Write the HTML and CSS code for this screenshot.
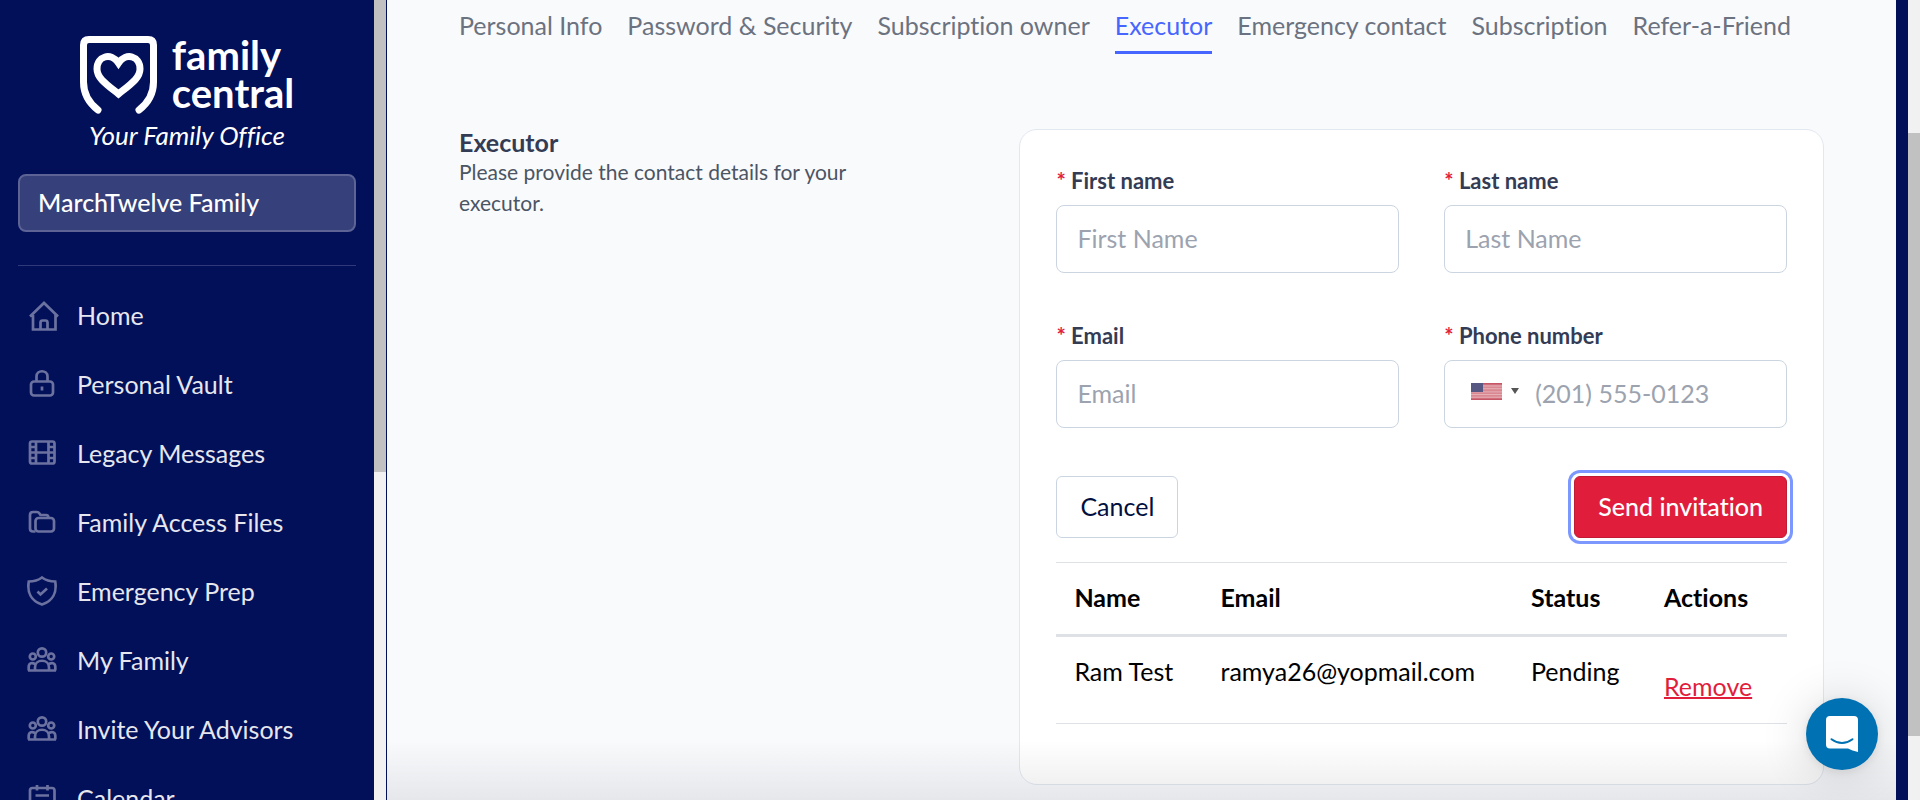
FILE: index.html
```html
<!DOCTYPE html>
<html lang="en">
<head>
<meta charset="utf-8">
<title>Family Central – Executor</title>
<link rel="stylesheet" href="styles.css">
</head>
<body>
<div class="app">
  <aside class="sidebar">
    <div class="sidebar-body">
      <div class="brand">
        <div class="brand-row">
          <svg class="brand-mark" viewBox="0 0 77 78" fill="none" stroke="#fff" stroke-width="7" stroke-linecap="round" stroke-linejoin="round" aria-hidden="true">
            <path d="M18 74C9 67 3.500 59 3.500 46V9Q3.500 3.500 9 3.500H68Q73.500 3.500 73.500 9V46C73.500 59 68 67 59 74"/>
            <path stroke-linejoin="miter" d="M38.500 58C26 48 17 42 17 33C17 20 31 16 38.500 27C46 16 60 20 60 33C60 42 51 48 38.500 58Z"/>
          </svg>
          <div class="brand-name">family<br>central</div>
        </div>
        <div class="brand-tag">Your Family Office</div>
      </div>
      <button type="button" class="family-switch">MarchTwelve Family</button>
      <nav class="side-nav">
        <a href="#"><svg viewBox="0 0 32 32" aria-hidden="true"><path d="M3 17.500L17 4L31 17.500M6 16V30.500H28.500V16M13.500 30V23.500Q13.500 21.500 15.500 21.500H18.500Q20.500 21.500 20.500 23.500V30"/></svg>Home</a>
        <a href="#"><svg viewBox="0 0 32 32" aria-hidden="true"><rect x="4" y="13.500" width="22" height="14" rx="3"/><path d="M9.500 13V8.500C9.500 1.500 20.500 1.500 20.500 8.500V13M15 18.500V22.500"/></svg>Personal Vault</a>
        <a href="#"><svg viewBox="0 0 32 32" aria-hidden="true"><rect x="3" y="4.500" width="24.500" height="22" rx="2"/><path d="M9 4.500V26.500M21.500 4.500V26.500M9 15.500H21.500M3 10H9M3 15.500H9M3 21H9M21.500 10H27.500M21.500 15.500H27.500M21.500 21H27.500"/></svg>Legacy Messages</a>
        <a href="#"><svg viewBox="0 0 32 32" aria-hidden="true"><path d="M8.500 25.500H6Q3 25.500 3 22.500V9Q3 6 6 6H10Q11.500 6 12.500 7.500L13.500 9H19Q21.500 9 21.500 12"/><rect x="8.500" y="12" width="18.500" height="13.500" rx="3"/></svg>Family Access Files</a>
        <a href="#"><svg viewBox="0 0 32 32" aria-hidden="true"><path d="M15 2.500C11 5.500 6 6.500 1.800 6.500C0 17 4 26 15 29.500C26 26 30 17 28.200 6.500C24 6.500 19 5.500 15 2.500ZM10.500 16.500L13.500 19.500L20 13.500"/></svg>Emergency Prep</a>
        <a href="#"><svg viewBox="0 0 32 32" aria-hidden="true"><circle cx="15" cy="8.500" r="4.200"/><circle cx="5.800" cy="12.500" r="3"/><circle cx="24.200" cy="12.500" r="3"/><path d="M1.700 26.500V23C1.700 18.500 5.500 18.500 8 20M28.300 26.500V23C28.300 18.500 24.500 18.500 22 20M8 26.500V23.500C8 14.500 22 14.500 22 23.500V26.500M1 26.500H29"/></svg>My Family</a>
        <a href="#"><svg viewBox="0 0 32 32" aria-hidden="true"><circle cx="15" cy="8.500" r="4.200"/><circle cx="5.800" cy="12.500" r="3"/><circle cx="24.200" cy="12.500" r="3"/><path d="M1.700 26.500V23C1.700 18.500 5.500 18.500 8 20M28.300 26.500V23C28.300 18.500 24.500 18.500 22 20M8 26.500V23.500C8 14.500 22 14.500 22 23.500V26.500M1 26.500H29"/></svg>Invite Your Advisors</a>
        <a href="#"><svg viewBox="0 0 32 32" aria-hidden="true"><rect x="3" y="6" width="24.500" height="22" rx="2.500"/><path d="M10 3V8.500M20.500 3V8.500M8.500 13.500H22"/></svg>Calendar</a>
      </nav>
    </div>
    <div class="scrollbar"><div class="thumb thumb-side"></div></div>
  </aside>

  <main class="content">
    <nav class="tabs">
      <a href="#">Personal Info</a>
      <a href="#">Password &amp; Security</a>
      <a href="#">Subscription owner</a>
      <a href="#" class="active" aria-current="page">Executor</a>
      <a href="#">Emergency contact</a>
      <a href="#">Subscription</a>
      <a href="#">Refer-a-Friend</a>
    </nav>
    <section class="panel">
      <div class="intro">
        <h1>Executor</h1>
        <p>Please provide the contact details for your executor.</p>
      </div>
      <div class="card">
        <form>
          <div class="fields">
            <div class="field">
              <label for="first"><span class="req">*</span> First name</label>
              <input id="first" type="text" placeholder="First Name">
            </div>
            <div class="field">
              <label for="last"><span class="req">*</span> Last name</label>
              <input id="last" type="text" placeholder="Last Name">
            </div>
            <div class="field">
              <label for="email"><span class="req">*</span> Email</label>
              <input id="email" type="email" placeholder="Email">
            </div>
            <div class="field">
              <label for="phone"><span class="req">*</span> Phone number</label>
              <div class="phone">
                <button type="button" class="country" aria-label="Country: United States">
                  <svg class="flag" viewBox="0 0 31 17" aria-hidden="true">
                    <rect width="31" height="17" fill="#d98791"/>
                    <path d="M0 .7H31M0 16.300H31" stroke="#c65565" stroke-width="1.400"/>
                    <path d="M12 3H31M12 5.700H31M0 8.900H31M0 11.500H31M0 14.200H31" stroke="#e7b4ba" stroke-width=".9"/>
                    <rect width="12" height="9" fill="#575783"/>
                  </svg>
                  <svg class="caret" viewBox="0 0 8 6" aria-hidden="true"><path d="M0 0H8L4 6Z" fill="#555"/></svg>
                </button>
                <input id="phone" type="tel" placeholder="(201) 555-0123">
              </div>
            </div>
          </div>
          <div class="actions">
            <button type="button" class="btn btn-plain">Cancel</button>
            <button type="button" class="btn btn-primary">Send invitation</button>
          </div>
        </form>
        <table class="people">
          <thead>
            <tr><th class="c-name">Name</th><th class="c-email">Email</th><th class="c-status">Status</th><th>Actions</th></tr>
          </thead>
          <tbody>
            <tr><td>Ram Test</td><td>ramya26@yopmail.com</td><td>Pending</td><td class="cell-action"><a href="#">Remove</a></td></tr>
          </tbody>
        </table>
      </div>
    </section>
    <div class="fade"></div>
    <button type="button" class="chat" aria-label="Open chat">
      <svg viewBox="0 0 32 36" aria-hidden="true">
        <path d="M4 0H28Q32 0 32 4V36Q26 34.500 22 32.500H4Q0 32.500 0 28.500V4Q0 0 4 0Z" fill="#fff"/>
        <path d="M5.500 23.200Q16 31 26.500 23.200" fill="none" stroke="#0071b2" stroke-width="2" stroke-linecap="round"/>
      </svg>
    </button>
  </main>
  <div class="edge"></div>
  <div class="scrollbar"><div class="thumb thumb-page"></div></div>
</div>
</body>
</html>
```
FILE: styles.css
```css
* { box-sizing: border-box; }

body {
  margin: 0;
  font-family: Lato, "Noto Sans", sans-serif;
  font-size: 25px;
  line-height: 36px;
  font-variant-ligatures: no-common-ligatures;
  color: #000;
}

a { color: inherit; text-decoration: none; }
button, input { font: inherit; font-variant-ligatures: inherit; }

.app {
  display: flex;
  height: 100vh;
  overflow: hidden;
  background: #020f59;
}

/* Sidebar */
.sidebar {
  display: flex;
  flex: none;
  width: 387px;
  border-right: 1px solid #020f59;
  color: #e6e7ee;
}
.sidebar-body {
  flex: 1;
  padding: 36px 18px 0;
}
.brand {
  display: flex;
  flex-direction: column;
  align-items: center;
}
.brand-row { display: flex; gap: 15px; height: 78px; color: #fff; }
.brand-mark { width: 77px; height: 78px; }
.brand-name { font-size: 40px; line-height: 38px; font-weight: 700; }
.brand-tag {
  font-size: 26px;
  line-height: 42px;
  font-style: italic;
  color: #fff;
}
.family-switch {
  display: block;
  width: 100%;
  height: 58px;
  margin-top: 18px;
  padding: 0 18px 2px;
  border: 2px solid #5d6495;
  border-radius: 8px;
  background: #36407a;
  color: #fff;
  font-weight: 500;
  text-align: left;
}
.side-nav {
  margin-top: 33px;
  padding-top: 14px;
  border-top: 1px solid #30397a;
}
.side-nav a {
  display: flex;
  align-items: center;
  gap: 18px;
  height: 69px;
  padding-left: 9px;
}
.side-nav svg {
  width: 32px;
  height: 32px;
  fill: none;
  stroke: #6b729f;
  stroke-width: 2.700;
}

/* Drawn scroll bars */
.scrollbar { flex: none; width: 12px; background: #f1f1f1; }
.thumb { background: #c1c1c1; }
.thumb-side { height: 59%; }
.thumb-page { height: 603px; margin-top: 133px; }
.edge { flex: none; width: 12px; background: #020f59; }

/* Content */
.content {
  position: relative;
  flex: 1;
  min-width: 0;
  padding: 0 72px;
  overflow: hidden;
  background: #f9fafc;
}
.tabs { display: flex; gap: 25px; color: #6b7280; }
.tabs a { padding: 7px 0 8px; border-bottom: 3px solid transparent; white-space: nowrap; }
.tabs .active { color: #4666ff; border-color: #4666ff; }

.panel {
  display: grid;
  grid-template-columns: repeat(5, 1fr);
  column-gap: 36px;
  margin-top: 75px;
}
.intro { grid-column: span 2; padding-right: 72px; }
.intro h1 {
  margin: 0;
  font-size: 25px;
  line-height: 27px;
  font-weight: 700;
  color: #333c54;
}
.intro p { margin: 0; font-size: 21px; line-height: 31px; color: #4b5563; }

.card {
  grid-column: span 3;
  padding: 36px 36px 60px;
  border: 1px solid #e2e8f0;
  border-radius: 18px;
  background: #fff;
}
.fields { display: grid; grid-template-columns: 1fr 1fr; gap: 48px 45px; }
.field { display: flex; flex-direction: column; gap: 9px; min-width: 0; }
.field label { font-size: 22px; line-height: 30px; font-weight: 700; color: #333c54; }
.req { color: #e11d3c; }
.field input {
  width: 100%;
  height: 68px;
  padding: 0 20px 3px;
  border: 1px solid #cbd5e1;
  border-radius: 8px;
  background: #fff;
}
.field input::placeholder { color: #9ca3af; opacity: 1; }
.phone { position: relative; }
.phone input { padding-left: 90px; }
.country {
  position: absolute;
  inset: 1px auto 1px 1px;
  display: flex;
  align-items: center;
  gap: 9px;
  padding: 0 0 6px 26px;
  border: 0;
  background: none;
}
.flag { width: 31px; height: 17px; }
.caret { width: 8px; height: 6px; }

.actions { display: flex; justify-content: space-between; margin-top: 48px; }
.btn {
  height: 62px;
  padding: 0 23px 3px;
  border: 1px solid #cbd5e1;
  border-radius: 6px;
  background: #fff;
}
.btn-plain { color: #020f40; }
.btn-primary {
  border-color: #c01a35;
  background: #e11d3c;
  color: #fff;
  font-weight: 500;
  box-shadow: 0 0 0 3px #fff, 0 0 0 6px #7c98ff;
}

.people {
  width: 100%;
  margin-top: 24px;
  border-collapse: collapse;
  border-top: 1px solid #dee2e6;
  table-layout: fixed;
}
.people th, .people td { padding: 16px 18px 19px; text-align: left; vertical-align: top; white-space: nowrap; }
.people th { border-bottom: 3px solid #dee2e6; font-weight: 700; }
.people td { border-bottom: 1px solid #dee2e6; }
.people .cell-action { padding: 31px 18px 19px; }
.cell-action a { color: #e11d3c; text-decoration: underline; text-decoration-thickness: 2px; }
.c-name { width: 20%; }
.c-email { width: 42.5%; }
.c-status { width: 18.2%; }

/* Overlays */
.fade {
  position: absolute;
  inset: auto 0 0 0;
  height: 60px;
  background: linear-gradient(rgba(10, 10, 30, 0), rgba(10, 10, 30, .08));
  pointer-events: none;
}
.chat {
  position: absolute;
  right: 18px;
  bottom: 30px;
  display: grid;
  place-items: center;
  width: 72px;
  height: 72px;
  padding: 0;
  border: 0;
  border-radius: 50%;
  background: #0071b2;
  box-shadow: 0 2px 9px rgba(0, 0, 0, .08), 0 3px 48px rgba(0, 0, 0, .16);
}
.chat svg { width: 32px; height: 36px; }
```
